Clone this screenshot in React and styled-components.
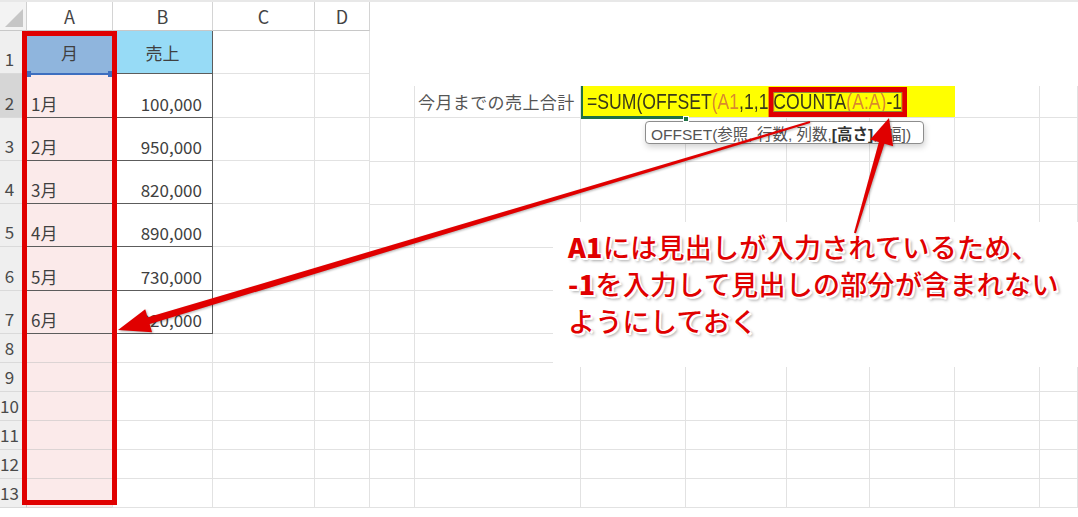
import React from 'react';
import styled, { createGlobalStyle } from 'styled-components';

const GRID = '#e2e2e2';
const RULE = '#5c5c5c';
const MARK = '#e00000';
const ACTIVE = '#1e7145';

const GlobalStyle = createGlobalStyle`
  html, body { margin: 0; padding: 0; background: #fff; }
  body {
    font-family: "Noto Sans CJK JP", "Liberation Sans", sans-serif;
    color: #404040;
  }
  * { box-sizing: border-box; }
`;

const Page = styled.div`
  position: relative;
  width: 1078px;
  height: 517px;
  display: flex;
  align-items: flex-start;
  overflow: hidden;
  background: #fff;
  border-top: 2px solid #e8e8e8;
`;

/* ---------- left sheet: month / sales table ---------- */

const Sheet = styled.div`
  position: relative;
  flex: none;
  width: 370px;
  display: grid;
  grid-template-columns: 27px 86px 100px 102px 55px;
  grid-template-rows: 29px repeat(7, 43.3px) repeat(6, 29px);
`;

const Corner = styled.div`
  display: flex;
  align-items: flex-end;
  justify-content: flex-end;
  padding: 0 3px 3px 0;
  background: #f3f3f3;
  border-right: 1px solid #d0d0d0;
  border-bottom: 1px solid #c8c8c8;
`;

const ColHead = styled.div`
  display: flex;
  align-items: center;
  justify-content: center;
  font-size: 18px;
  color: #444;
  background: #fff;
  border-right: 1px solid #d4d4d4;
  border-bottom: 1px solid #c8c8c8;
`;

const RowHead = styled.div`
  display: flex;
  align-items: flex-end;
  justify-content: center;
  padding: 0 7px 4px 0;
  font-size: 17px;
  line-height: 20px;
  color: #4a4a4a;
  background: ${p => (p.$active ? '#d6d6d6' : '#efefef')};
  border-right: 1px solid #c8c8c8;
  border-bottom: 1px solid #dadada;
`;

const Cell = styled.div`
  border-right: 1px solid ${GRID};
  border-bottom: 1px solid ${GRID};
`;

const TitleCell = styled.div`
  position: relative;
  display: flex;
  align-items: flex-end;
  justify-content: center;
  padding-bottom: 10px;
  font-size: 17px;
  line-height: 20px;
  background: ${p => p.$fill};
  border-right: 1px solid ${RULE};
  border-bottom: 1px solid ${RULE};
`;

const SelectEdge = styled.span`
  position: absolute;
  left: 0;
  right: 0;
  bottom: -2px;
  height: 2px;
  background: #3d6fc0;
  &::before,
  &::after {
    content: '';
    position: absolute;
    top: -2px;
    width: 5px;
    height: 6px;
    background: #3d6fc0;
  }
  &::before { left: -1px; }
  &::after { right: -1px; }
`;

const MonthCell = styled.div`
  display: flex;
  align-items: flex-end;
  padding: 0 0 3px 4px;
  font-size: 17px;
  line-height: 20px;
  background: #fbeaea;
  border-right: 1px solid ${GRID};
  border-bottom: 1px solid ${p => (p.$ruled ? RULE : '#dcd4d4')};
`;

const AmountCell = styled.div`
  display: flex;
  align-items: flex-end;
  justify-content: flex-end;
  padding: 0 10px 3px 0;
  font-size: 17px;
  line-height: 20px;
  border-right: 1px solid ${RULE};
  border-bottom: 1px solid ${RULE};
`;

const ColumnMark = styled.div`
  position: absolute;
  left: 22px;
  top: 29px;
  width: 95px;
  height: 474px;
  border: 5px solid ${MARK};
`;

/* ---------- right sheet: running total formula ---------- */

const Board = styled.div`
  flex: 1;
  margin-top: 84px;
  display: grid;
  grid-template-columns: 45px 166px 105px 101px 83px 85px 85px 1fr;
  grid-template-rows: 32px 44px repeat(4, 43px) repeat(6, 29px);
`;

const LabelCell = styled(Cell)`
  display: flex;
  align-items: center;
  padding-left: 3px;
  font-size: 17px;
  letter-spacing: 0.4px;
  color: #555;
  white-space: nowrap;
`;

const FormulaCell = styled.div`
  grid-column: span 4;
  position: relative;
  display: flex;
  align-items: center;
  padding-left: 4px;
  background: #ffff00;
  border-left: 2px solid ${ACTIVE};
  border-bottom: 1px solid ${GRID};
  &::after {
    content: '';
    position: absolute;
    left: -2px;
    bottom: -2px;
    width: 105px;
    height: 3px;
    background: ${ACTIVE};
  }
`;

const FillHandle = styled.span`
  position: absolute;
  left: 100px;
  bottom: -5px;
  width: 6px;
  height: 6px;
  background: ${ACTIVE};
  border: 1px solid #fff;
  z-index: 1;
`;

const Formula = styled.div`
  display: inline-block;
  white-space: nowrap;
  font-family: "Liberation Sans", sans-serif;
  font-size: 22px;
  line-height: 30px;
  color: #3a3a1a;
  transform: scaleX(0.8);
  transform-origin: left center;
`;

const Ref = styled.span`
  color: #d98a2c;
`;

const RangeMark = styled.span`
  position: relative;
  display: inline-block;
  &::before {
    content: '';
    position: absolute;
    top: 0;
    bottom: 0;
    left: -6px;
    right: -6px;
    border: 5px solid ${MARK};
    border-left-width: 6px;
    border-right-width: 6px;
    box-shadow: inset 0 0 0 1px #8c8c3a;
  }
`;

const Hint = styled.div`
  position: absolute;
  left: 645px;
  top: 119px;
  width: 279px;
  height: 23px;
  padding: 0 5px;
  display: flex;
  align-items: center;
  background: #fff;
  border: 1px solid #8d8d8d;
  border-radius: 4px;
  box-shadow: 1px 3px 6px rgba(0, 0, 0, 0.18);
  font-family: "Liberation Sans", "Noto Sans CJK JP", sans-serif;
  font-size: 15.5px;
  color: #555;
  white-space: nowrap;
  b {
    font-weight: 700;
    color: #333;
  }
`;

const Note = styled.div`
  position: absolute;
  left: 553px;
  top: 220px;
  width: 525px;
  height: 145px;
  padding: 6px 0 0 15px;
  background: #fff;
  font-family: "Noto Sans CJK JP", sans-serif;
  font-weight: 500;
  font-size: 27px;
  line-height: 37px;
  letter-spacing: 0.3px;
  color: ${MARK};
  text-shadow:
    1px 1px 0 #fff, -1px -1px 0 #fff, 1px -1px 0 #fff, -1px 1px 0 #fff,
    2px 2px 0 #fff, 3px 3px 3px rgba(0, 0, 0, 0.35);
`;

const NoteLine = styled.div`
  white-space: nowrap;
`;

const Strong = styled.span`
  font-weight: 800;
`;

const Overlay = styled.svg`
  position: absolute;
  left: 0;
  top: -2px;
  width: 1078px;
  height: 517px;
  pointer-events: none;
  filter: drop-shadow(1px 1px 1px rgba(0, 0, 0, 0.3));
`;

// tapered shaft plus a triangular head, from tail point to tip point
const arrowShapes = (from, to, { tail = 2, neck = 7, headLen = 32, headWidth = 24 } = {}) => {
  const dx = to[0] - from[0];
  const dy = to[1] - from[1];
  const len = Math.hypot(dx, dy);
  const ux = dx / len;
  const uy = dy / len;
  const nx = -uy;
  const ny = ux;
  const bx = to[0] - ux * headLen;
  const by = to[1] - uy * headLen;
  const p = (x, y) => `${x.toFixed(1)},${y.toFixed(1)}`;
  const shaft = [
    p(from[0] + (nx * tail) / 2, from[1] + (ny * tail) / 2),
    p(bx + ux * 4 + (nx * neck) / 2, by + uy * 4 + (ny * neck) / 2),
    p(bx + ux * 4 - (nx * neck) / 2, by + uy * 4 - (ny * neck) / 2),
    p(from[0] - (nx * tail) / 2, from[1] - (ny * tail) / 2),
  ].join(' ');
  const head = [
    p(to[0], to[1]),
    p(bx + (nx * headWidth) / 2, by + (ny * headWidth) / 2),
    p(bx - (nx * headWidth) / 2, by - (ny * headWidth) / 2),
  ].join(' ');
  return { shaft, head };
};

const Arrow = ({ from, to, ...opts }) => {
  const { shaft, head } = arrowShapes(from, to, opts);
  return (
    <g fill={MARK}>
      <polygon points={shaft} />
      <polygon points={head} />
    </g>
  );
};

const months = [
  ['1月', '100,000'],
  ['2月', '950,000'],
  ['3月', '820,000'],
  ['4月', '890,000'],
  ['5月', '730,000'],
  ['6月', '920,000'],
];

const spareRows = [8, 9, 10, 11, 12, 13];

const SalesSheet = () => (
  <Sheet>
    <Corner>
      <svg width="18" height="18" viewBox="0 0 18 18">
        <polygon points="18,0 18,18 0,18" fill="#c6c6c6" />
      </svg>
    </Corner>
    {['A', 'B', 'C', 'D'].map(c => (
      <ColHead key={c}>{c}</ColHead>
    ))}

    <RowHead>1</RowHead>
    <TitleCell $fill="#8fb5dd">
      月
      <SelectEdge />
    </TitleCell>
    <TitleCell $fill="#97dbf6">売上</TitleCell>
    <Cell />
    <Cell />

    {months.map(([month, amount], i) => (
      <React.Fragment key={month}>
        <RowHead $active={i === 0}>{i + 2}</RowHead>
        <MonthCell $ruled>{month}</MonthCell>
        <AmountCell>{amount}</AmountCell>
        <Cell />
        <Cell />
      </React.Fragment>
    ))}

    {spareRows.map(n => (
      <React.Fragment key={n}>
        <RowHead>{n}</RowHead>
        <MonthCell />
        <Cell />
        <Cell />
        <Cell />
      </React.Fragment>
    ))}

    <ColumnMark />
  </Sheet>
);

const TotalBoard = () => (
  <Board>
    <Cell />
    <LabelCell>今月までの売上合計</LabelCell>
    <FormulaCell>
      <Formula>
        =SUM(OFFSET<Ref>(A1</Ref>,1,1,
        <RangeMark>
          COUNTA<Ref>(A:A)</Ref>-1
        </RangeMark>
      </Formula>
      <FillHandle />
    </FormulaCell>
    <Cell />
    <Cell />
    {Array.from({ length: 11 * 8 }, (_, i) => (
      <Cell key={i} />
    ))}
  </Board>
);

export default function App() {
  return (
    <>
      <GlobalStyle />
      <Page>
        <SalesSheet />
        <TotalBoard />

        <Hint>
          OFFSET(参照, 行数, 列数, <b>[高さ]</b>, [幅])
        </Hint>

        <Note>
          <NoteLine>
            <Strong>A1</Strong>には見出しが入力されているため、
          </NoteLine>
          <NoteLine>
            <Strong>-1</Strong>を入力して見出しの部分が含まれない
          </NoteLine>
          <NoteLine>ようにしておく</NoteLine>
        </Note>

        <Overlay viewBox="0 0 1078 517">
          <Arrow from={[810, 122]} to={[118, 330]} tail={2} neck={7} headLen={32} headWidth={24} />
          <Arrow from={[855, 233]} to={[889, 118]} tail={2} neck={6} headLen={26} headWidth={24} />
        </Overlay>
      </Page>
    </>
  );
}
